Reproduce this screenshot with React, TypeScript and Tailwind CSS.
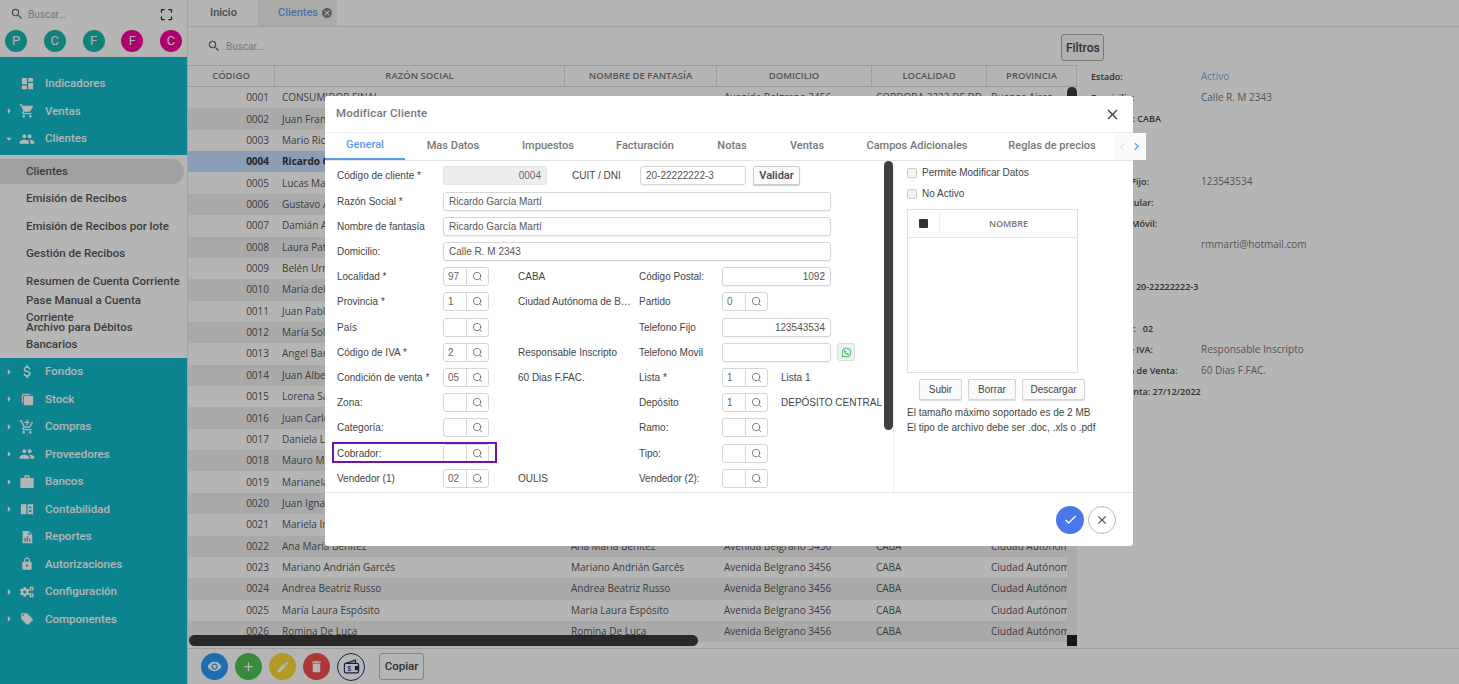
import type { ReactNode } from "react";
import {
  MdDashboard,
  MdShoppingCart,
  MdPeople,
  MdAttachMoney,
  MdAddShoppingCart,
  MdWork,
  MdLock,
  MdLocalOffer,
  MdArrowRight,
  MdArrowDropDown,
  MdCropFree,
  MdSearch,
  MdCancel,
  MdClose,
  MdCheck,
  MdVisibility,
  MdAdd,
  MdEdit,
  MdDelete,
  MdChevronLeft,
  MdChevronRight,
} from "react-icons/md";
import { FaCogs, FaWhatsapp } from "react-icons/fa";
import { Search } from "lucide-react";

const roboto = "font-['Roboto',sans-serif]";
const openSans = "font-['Open_Sans',sans-serif]";
const arial = "font-['Liberation_Sans',sans-serif]";

const StockIcon = () => (
  <svg viewBox="0 0 16 16" className="w-[13px] h-[13px]" fill="currentColor">
    <path d="M1 3.5 C1 2 2 1 3.5 1 H11 V2.5 H4 C3 2.5 2.5 3 2.5 4 V12 H1 Z" />
    <rect x="3.5" y="3.5" width="11.5" height="11.5" rx="1.5" />
  </svg>
);

const BookIcon = () => (
  <svg viewBox="0 0 16 16" className="w-[14px] h-[14px]" fill="currentColor">
    <path d="M1 2.5 H7.3 V14 H1 Z" />
    <path d="M8.7 2.5 H15 V14 H8.7 Z M10.5 5 V7 H13 V5 Z M10.5 9 V11.5 H13 V9 Z" fillRule="evenodd" />
  </svg>
);

const ReportIcon = () => (
  <svg viewBox="0 0 16 16" className="w-[14px] h-[14px]" fill="currentColor">
    <path
      d="M3 1 H10 L14 5 V15 H3 Z M9.5 2 V5.5 H13 Z M5 9 V13 H6.5 V9 Z M7.8 7.5 V13 H9.2 V7.5 Z M10.5 10 V13 H12 V10 Z"
      fillRule="evenodd"
    />
  </svg>
);

const WalletIcon = () => (
  <svg viewBox="0 0 24 24" className="w-[19px] h-[19px]" fill="none" stroke="#1c2f5e" strokeWidth="1.5">
    <path d="M5 8 L17 4 V8" />
    <rect x="3" y="8" width="18" height="12" rx="2" />
    <path d="M21 12 H17 V16 H21" fill="#1c2f5e" />
    <text x="9" y="17.5" fontSize="9" textAnchor="middle" fill="#1c2f5e" stroke="none" fontFamily="Liberation Sans">
      $
    </text>
  </svg>
);

type MenuItem = { label: string; icon: ReactNode; arrow?: "right" | "down" };

const topMenu: MenuItem[] = [
  { label: "Indicadores", icon: <MdDashboard size={15} /> },
  { label: "Ventas", icon: <MdShoppingCart size={16} />, arrow: "right" },
  { label: "Clientes", icon: <MdPeople size={16} />, arrow: "down" },
];

const subMenu = [
  "Clientes",
  "Emisión de Recibos",
  "Emisión de Recibos por lote",
  "Gestión de Recibos",
  "Resumen de Cuenta Corriente",
  "Pase Manual a Cuenta Corriente",
  "Archivo para Débitos Bancarios",
];

const bottomMenu: MenuItem[] = [
  { label: "Fondos", icon: <MdAttachMoney size={17} />, arrow: "right" },
  { label: "Stock", icon: <StockIcon />, arrow: "right" },
  { label: "Compras", icon: <MdAddShoppingCart size={16} />, arrow: "right" },
  { label: "Proveedores", icon: <MdPeople size={16} />, arrow: "right" },
  { label: "Bancos", icon: <MdWork size={16} />, arrow: "right" },
  { label: "Contabilidad", icon: <BookIcon />, arrow: "right" },
  { label: "Reportes", icon: <ReportIcon /> },
  { label: "Autorizaciones", icon: <MdLock size={14} /> },
  { label: "Configuración", icon: <FaCogs size={14} />, arrow: "right" },
  { label: "Componentes", icon: <MdLocalOffer size={14} />, arrow: "right" },
];

const names = [
  "CONSUMIDOR FINAL",
  "Juan Francisco Pérez",
  "Mario Ricardo Gómez",
  "Ricardo García Martí",
  "Lucas Martín Díaz",
  "Gustavo Adrián Ruiz",
  "Damián Alberto Sosa",
  "Laura Patricia Vega",
  "Belén Urrutia",
  "María del Carmen Paz",
  "Juan Pablo Torres",
  "María Sol Herrera",
  "Angel Barrios",
  "Juan Alberto Molina",
  "Lorena Salas",
  "Juan Carlos Medina",
  "Daniela López",
  "Mauro Maidana",
  "Marianela Ríos",
  "Juan Ignacio Rojas",
  "Mariela Inés Castro",
  "Ana María Benítez",
  "Mariano Andrián Garcés",
  "Andrea Beatriz Russo",
  "María Laura Espósito",
  "Romina De Luca",
];

const circles = [
  { letter: "P", color: "bg-[#16b8ac]" },
  { letter: "C", color: "bg-[#16b8ac]" },
  { letter: "F", color: "bg-[#16b8ac]" },
  { letter: "F", color: "bg-[#f8009c]" },
  { letter: "C", color: "bg-[#f8009c]" },
];

const tabs = [
  { label: "General", w: "w-[80px]" },
  { label: "Mas Datos", w: "w-[96px]" },
  { label: "Impuestos", w: "w-[94px]" },
  { label: "Facturación", w: "w-[100px]" },
  { label: "Notas", w: "w-[74px]" },
  { label: "Ventas", w: "w-[76px]" },
  { label: "Campos Adicionales", w: "w-[144px]" },
  { label: "Reglas de precios", w: "w-[126px]" },
];

const details = [
  { label: "Estado:", value: "Activo", blue: true },
  { label: "Domicilio:", value: "Calle R. M 2343" },
  { label: "Localidad: CABA" },
  {},
  {},
  { label: "Teléfono Fijo:", value: "123543534" },
  { label: "Tel. Particular:" },
  { label: "Teléfono Móvil:" },
  { label: "Email:", value: "rmmarti@hotmail.com" },
  {},
  { label: "CUIT/DNI: 20-22222222-3" },
  {},
  { label: "Vendedor:   02" },
  { label: "Código de IVA:", value: "Responsable Inscripto" },
  { label: "Condición de Venta:", value: "60 Dias F.FAC." },
  { label: "Última Venta: 27/12/2022" },
  { label: "Obs.:" },
];

function MenuRow({ item }: { item: MenuItem }) {
  return (
    <div className={`flex items-center h-[27.5px] text-[#ffffff] ${roboto} font-medium text-[11.5px]`}>
      <span className="w-[17px] flex justify-center pl-[1px]">
        {item.arrow === "right" && <MdArrowRight size={14} />}
        {item.arrow === "down" && <MdArrowDropDown size={14} />}
      </span>
      <span className="w-[20px] flex justify-center">{item.icon}</span>
      <span className="ml-[8px]">{item.label}</span>
    </div>
  );
}

function Sidebar() {
  return (
    <aside className="w-[188px] shrink-0 flex flex-col border-r border-[#e4e4e4] bg-white">
      <div className="h-[57px] shrink-0">
        <div className={`flex items-center h-[28px] pl-[10px] pr-[13px] ${roboto} text-[10px] text-[#aaaaaa]`}>
          <MdSearch size={14} className="text-[#666666]" />
          <span className="ml-[4px] flex-1">Buscar...</span>
          <MdCropFree size={15} className="text-[#222222]" />
        </div>
        <div className="flex justify-between px-[5px] mt-[2px]">
          {circles.map((c, i) => (
            <span
              key={i}
              className={`w-[22px] h-[22px] rounded-full flex items-center justify-center text-white text-[13px] ${roboto} ${c.color}`}
            >
              {c.letter}
            </span>
          ))}
        </div>
      </div>
      <div className="bg-[#11bacb] pt-[13px] pb-[2.5px]">
        {topMenu.map((m) => (
          <MenuRow key={m.label} item={m} />
        ))}
      </div>
      <div className={`pt-[2.5px] pb-[8px] ${roboto} font-medium text-[11.5px] text-[#555555]`}>
        {subMenu.map((s, i) => (
          <div key={s} className="h-[27.5px] flex items-center pr-[3px]">
            <div className={`w-full h-[25px] flex items-center pl-[26px] rounded-r-full ${i === 0 ? "bg-[#e2e2e2]" : ""}`}>
              {s}
            </div>
          </div>
        ))}
      </div>
      <div className="bg-[#11bacb] flex-1">
        {bottomMenu.map((m) => (
          <MenuRow key={m.label} item={m} />
        ))}
      </div>
    </aside>
  );
}

function DataTable() {
  const headers = ["CÓDIGO", "RAZÓN SOCIAL", "NOMBRE DE FANTASÍA", "DOMICILIO", "LOCALIDAD", "PROVINCIA"];
  return (
    <div className="w-[889px] shrink-0 flex flex-col relative">
      <div
        className={`grid grid-cols-[87px_290px_152px_155px_115px_90px] h-[22px] shrink-0 border-y border-[#dddddd] ${openSans} font-semibold text-[9.5px] text-[#777777]`}
      >
        {headers.map((h) => (
          <div key={h} className="flex items-center justify-center border-r border-[#e2e2e2]">
            {h}
          </div>
        ))}
      </div>
      <div className="flex flex-1 min-h-0">
        <div className={`w-[879px] overflow-hidden ${openSans} text-[10px] text-[#555555]`}>
          {names.map((n, i) => {
            const code = String(i + 1).padStart(4, "0");
            const selected = i === 3;
            return (
              <div
                key={code}
                className={`grid grid-cols-[87px_290px_152px_155px_115px_80px] h-[21.36px] items-center whitespace-nowrap ${
                  selected ? "bg-[#c3e1ff] font-bold text-[#333333]" : i % 2 === 1 ? "bg-[#eeefee]" : "bg-white"
                }`}
              >
                <div className="text-right pr-[6px]">{code}</div>
                <div className="pl-[7px]">{n}</div>
                <div className="pl-[6px]">{i === 0 ? "" : n}</div>
                <div className="pl-[7px]">Avenida Belgrano 3456</div>
                <div className="pl-[4px] overflow-hidden">{i === 0 ? "CORDOBA 2222 DE DD" : "CABA"}</div>
                <div className="pl-[4px] overflow-hidden">{i === 0 ? "Buenos Aires" : "Ciudad Autónoma de Buenos Aires"}</div>
              </div>
            );
          })}
        </div>
        <div className="w-[10px] bg-[#f1f1f1]">
          <div className="h-[420px] bg-[#3a3a3a] rounded-full" />
        </div>
      </div>
      <div className="absolute left-0 right-0 bottom-[2px] h-[11px] flex justify-between">
        <div className="ml-[1px] w-[509px] bg-[#3a3a3a] rounded-full" />
        <div className="w-[10px] bg-[#222222]" />
      </div>
    </div>
  );
}

function DetailPanel() {
  return (
    <div className={`flex-1 pl-[14px] pt-[1px] ${openSans} text-[9px] text-[#666666]`}>
      {details.map((d, i) => (
        <div key={i} className="flex items-center h-[21px]">
          <span className="w-[110px] whitespace-pre font-semibold text-[#444444]">{d.label}</span>
          {d.value && <span className={`text-[10px] ${d.blue ? "text-[#7fa8e8]" : "text-[#777777]"}`}>{d.value}</span>}
        </div>
      ))}
    </div>
  );
}

function ToolButton({ color, children }: { color: string; children: ReactNode }) {
  return <span className={`w-[27px] h-[27px] rounded-full flex items-center justify-center text-white ${color}`}>{children}</span>;
}

function Main() {
  return (
    <main className="flex-1 min-w-0 flex flex-col bg-white">
      <div className={`h-[27px] shrink-0 flex border-b border-[#e4e4e4] ${roboto} font-medium text-[11px]`}>
        <div className="w-[70px] flex items-center justify-center text-[#666666] pl-[1px]">Inicio</div>
        <div className="w-[79px] bg-[#eff1ef] flex items-center pl-[20px] text-[#6a9fea]">
          Clientes
          <MdCancel size={12} className="text-[#888888] ml-[3px]" />
        </div>
      </div>
      <div className={`h-[38px] shrink-0 flex items-center ${roboto} text-[10px] text-[#aaaaaa]`}>
        <MdSearch size={14} className="text-[#666666] ml-[19px]" />
        <span className="ml-[5px]">Buscar...</span>
        <div className="ml-[797px] w-[43px] h-[27px] mt-[3px] border border-[#aaaaaa] rounded-[3px] bg-[#f8f8f8] flex items-center justify-center text-[#444444] font-medium text-[12px]">
          Filtros
        </div>
      </div>
      <div className="flex-1 min-h-0 flex">
        <DataTable />
        <DetailPanel />
      </div>
      <div className="h-[36px] shrink-0 flex items-center gap-[7px] pl-[13px] border-t border-[#dddddd]">
        <ToolButton color="bg-[#2b9af5]">
          <MdVisibility size={15} />
        </ToolButton>
        <ToolButton color="bg-[#4ec452]">
          <MdAdd size={15} />
        </ToolButton>
        <ToolButton color="bg-[#fdd835]">
          <MdEdit size={14} />
        </ToolButton>
        <ToolButton color="bg-[#f44c4c]">
          <MdDelete size={15} />
        </ToolButton>
        <span className="w-[28px] h-[28px] rounded-full border border-[#1c2f5e] flex items-center justify-center">
          <WalletIcon />
        </span>
        <div className={`ml-[7px] w-[45px] h-[27px] border border-[#bbbbbb] rounded-[3px] flex items-center justify-center ${roboto} font-medium text-[11.5px] text-[#444444]`}>
          Copiar
        </div>
      </div>
    </main>
  );
}

function Lookup({ value, wide }: { value?: string; wide?: boolean }) {
  return (
    <div className={`flex h-[19px] border border-[#d6d6d6] rounded-[3px] text-[10px] text-[#666666] ${wide ? "w-[46px]" : "w-[46px]"}`}>
      <span className="w-[23px] pl-[4px] flex items-center border-r border-[#d6d6d6]">{value}</span>
      <span className="flex-1 flex items-center justify-center">
        <Search size={11} className="text-[#555555]" strokeWidth={1.6} />
      </span>
    </div>
  );
}

function Field({ value, className = "", right }: { value?: string; className?: string; right?: boolean }) {
  return (
    <div
      className={`h-[19px] border border-[#d6d6d6] rounded-[3px] flex items-center px-[5px] text-[10px] text-[#555555] shadow-[0_1px_1px_rgba(0,0,0,0.06)] ${
        right ? "justify-end" : ""
      } ${className}`}
    >
      {value}
    </div>
  );
}

function Row({ label, children, extra }: { label: string; children: ReactNode; extra?: ReactNode }) {
  return (
    <div className="relative flex items-center h-[25.2px] pl-[12px] whitespace-nowrap">
      <span className="w-[106px] shrink-0">{label}</span>
      {children}
      {extra}
    </div>
  );
}

function LookupRow({
  label,
  value,
  text,
  label2,
  value2,
  text2,
}: {
  label: string;
  value?: string;
  text?: string;
  label2: string;
  value2?: string;
  text2?: string;
}) {
  return (
    <Row label={label}>
      <Lookup value={value} />
      <span className="ml-[29px] w-[121px] shrink-0 overflow-hidden text-ellipsis pr-[6px]">{text}</span>
      <span className="w-[83px] shrink-0">{label2}</span>
      <Lookup value={value2} />
      {text2 && <span className="ml-[13px]">{text2}</span>}
    </Row>
  );
}

function FormColumn() {
  return (
    <div className={`w-[559px] shrink-0 pt-[2.4px] ${arial} text-[10px] text-[#444444]`}>
      <Row label="Código de cliente *">
        <div className="w-[104px] h-[19px] bg-[#eeeeee] border border-[#e2e2e2] rounded-[3px] flex items-center justify-end pr-[5px] text-[#666666]">
          0004
        </div>
        <span className="ml-[25px] w-[68px]">CUIT / DNI</span>
        <Field value="20-22222222-3" className="w-[106px]" />
        <div className={`ml-[7px] w-[47px] h-[19px] border border-[#cccccc] rounded-[2px] bg-[#fafafa] shadow-[0_1px_1px_rgba(0,0,0,0.2)] flex items-center justify-center ${roboto} font-medium text-[11px] text-[#444444]`}>
          Validar
        </div>
      </Row>
      <Row label="Razón Social *">
        <Field value="Ricardo García Martí" className="w-[388px]" />
      </Row>
      <Row label="Nombre de fantasía">
        <Field value="Ricardo García Martí" className="w-[388px]" />
      </Row>
      <Row label="Domicilio:">
        <Field value="Calle R. M 2343" className="w-[388px]" />
      </Row>
      <Row label="Localidad *">
        <Lookup value="97" />
        <span className="ml-[29px] w-[121px]">CABA</span>
        <span className="w-[83px]">Código Postal:</span>
        <Field value="1092" right className="w-[109px]" />
      </Row>
      <LookupRow label="Provincia *" value="1" text="Ciudad Autónoma de Buenos Aires" label2="Partido" value2="0" />
      <Row label="País">
        <Lookup />
        <span className="ml-[29px] w-[121px]" />
        <span className="w-[83px]">Telefono Fijo</span>
        <Field value="123543534" right className="w-[109px]" />
      </Row>
      <Row label="Código de IVA *">
        <Lookup value="2" />
        <span className="ml-[29px] w-[121px]">Responsable Inscripto</span>
        <span className="w-[83px]">Telefono Movil</span>
        <Field className="w-[109px]" />
        <span className="ml-[6px] w-[18px] h-[18px] rounded-[3px] border border-[#dddddd] bg-[#f2f2f2] flex items-center justify-center">
          <FaWhatsapp size={11} className="text-[#22b04c]" />
        </span>
      </Row>
      <LookupRow label="Condición de venta *" value="05" text="60 Dias F.FAC." label2="Lista *" value2="1" text2="Lista 1" />
      <LookupRow label="Zona:" label2="Depósito" value2="1" text2="DEPÓSITO CENTRAL" />
      <LookupRow label="Categoría:" label2="Ramo:" />
      <div className="relative">
        <LookupRow label="Cobrador:" label2="Tipo:" />
        <div className="absolute left-[7px] top-[2px] w-[165px] h-[21px] border-2 border-[#7412ab]" />
      </div>
      <LookupRow label="Vendedor (1)" value="02" text="OULIS" label2="Vendedor (2):" />
    </div>
  );
}

function AttachColumn() {
  return (
    <div className={`flex-1 pl-[13px] ${arial} text-[10px] text-[#444444]`}>
      <label className="flex items-center h-[21px] mt-[1px] gap-[5px]">
        <span className="w-[10px] h-[10px] rounded-[2px] border border-[#cccccc] bg-[#f4f4f4]" />
        Permite Modificar Datos
      </label>
      <label className="flex items-center h-[21px] gap-[5px]">
        <span className="w-[10px] h-[10px] rounded-[2px] border border-[#cccccc] bg-[#f4f4f4]" />
        No Activo
      </label>
      <div className="w-[171px] h-[164px] mt-[5px] border border-[#e0e0e0]">
        <div className="h-[28px] flex items-center border-b border-[#e6e6e6]">
          <div className="w-[32px] h-[21px] border-r border-[#eeeeee] flex items-center justify-center">
            <span className="w-[9px] h-[9px] bg-[#333333] rounded-[1px]" />
          </div>
          <div className={`flex-1 text-center ${openSans} font-semibold text-[9px] text-[#777777]`}>NOMBRE</div>
        </div>
      </div>
      <div className="flex mt-[6px] pl-[12px] gap-[6px]">
        {[
          { t: "Subir", w: "w-[43px]" },
          { t: "Borrar", w: "w-[48px]" },
          { t: "Descargar", w: "w-[63px]" },
        ].map((b) => (
          <div
            key={b.t}
            className={`${b.w} h-[21px] border border-[#d4d4d4] rounded-[2px] bg-[#fafafa] shadow-[0_1px_1px_rgba(0,0,0,0.15)] flex items-center justify-center text-[#444444]`}
          >
            {b.t}
          </div>
        ))}
      </div>
      <div className="mt-[5px] leading-[15px]">
        <p>El tamaño máximo soportado es de 2 MB</p>
        <p>El tipo de archivo debe ser .doc, .xls o .pdf</p>
      </div>
    </div>
  );
}

function ClienteModal() {
  return (
    <div className="absolute z-20 left-[325px] top-[96px] w-[808px] h-[450px] bg-white rounded-[3px] flex flex-col">
      <div className="h-[37px] shrink-0 flex items-center justify-between pl-[11px] pr-[12px] border-b border-[#eeeeee]">
        <span className={`${roboto} font-medium text-[11.5px] text-[#777777] tracking-[0.2px]`}>Modificar Cliente</span>
        <MdClose size={17} className="text-[#444444]" />
      </div>
      <div className={`h-[28px] shrink-0 flex items-stretch border-b border-[#e4e4e4] ${roboto} font-medium text-[11px] text-[#777777]`}>
        {tabs.map((t, i) => (
          <div
            key={t.label}
            className={`${t.w} shrink-0 flex items-center justify-center whitespace-nowrap ${
              i === 0 ? "text-[#5b9bf0] border-b-2 border-[#5b9bf0]" : ""
            }`}
          >
            {t.label}
          </div>
        ))}
        <div className="flex-1 flex items-center justify-end pr-[2px] bg-[#fafafa]">
          <MdChevronLeft size={14} className="text-[#dce8f8]" />
          <MdChevronRight size={15} className="text-[#5b9bf0]" />
        </div>
      </div>
      <div className="flex-1 min-h-0 flex overflow-hidden">
        <FormColumn />
        <div className="w-[10px] shrink-0 border-r border-[#eeeeee]">
          <div className="h-[269px] bg-[#3d3f40] rounded-full" />
        </div>
        <AttachColumn />
      </div>
      <div className="h-[54px] shrink-0 border-t border-[#e6e6e6] flex items-center justify-end gap-[4px] pr-[17px] pb-[14px] pt-[14px]">
        <span className="w-[28px] h-[28px] rounded-full bg-[#4a77ea] flex items-center justify-center text-white">
          <MdCheck size={15} />
        </span>
        <span className="w-[28px] h-[28px] rounded-full border border-[#bbbbbb] flex items-center justify-center text-[#444444]">
          <MdClose size={14} />
        </span>
      </div>
    </div>
  );
}

export default function App() {
  return (
    <div className="relative flex h-screen w-screen overflow-hidden">
      <Sidebar />
      <Main />
      <div className="absolute inset-0 z-10 bg-black/[0.29]" />
      <ClienteModal />
    </div>
  );
}
